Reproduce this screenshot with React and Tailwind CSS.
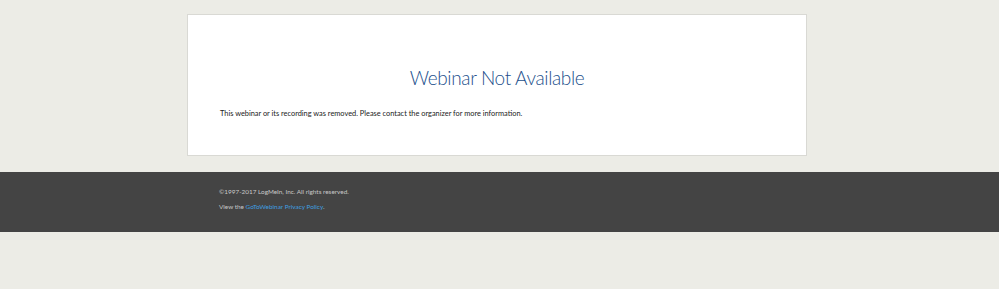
export default function App() {
  return (
    <div className="min-h-[289px] bg-[#ececE6] font-['Lato',sans-serif]">
      <div className="pt-[14px] pb-[16px]">
        <div className="ml-[187px] w-[620px] h-[142px] bg-white border border-[#d9d9d4]">
          <h1 className="pt-[48px] text-center text-[19px] tracking-[-0.35px] leading-[30px] font-light text-[#23508c]">
            Webinar Not Available
          </h1>
          <p className="mt-[15px] pl-[32px] text-[7.4px] leading-[12px] text-[#222]">
            This webinar or its recording was removed. Please contact the organizer for more information.
          </p>
        </div>
      </div>
      <footer className="h-[60px] bg-[#444444] pl-[219px] pt-[15px] text-[6.4px] text-[#c8c8c8]">
        <p className="leading-[10px]">©1997-2017 LogMeIn, Inc. All rights reserved.</p>
        <p className="mt-[5px] leading-[10px]">
          View the <a className="text-[#3f9fe0]">GoToWebinar Privacy Policy</a>.
        </p>
      </footer>
    </div>
  );
}
